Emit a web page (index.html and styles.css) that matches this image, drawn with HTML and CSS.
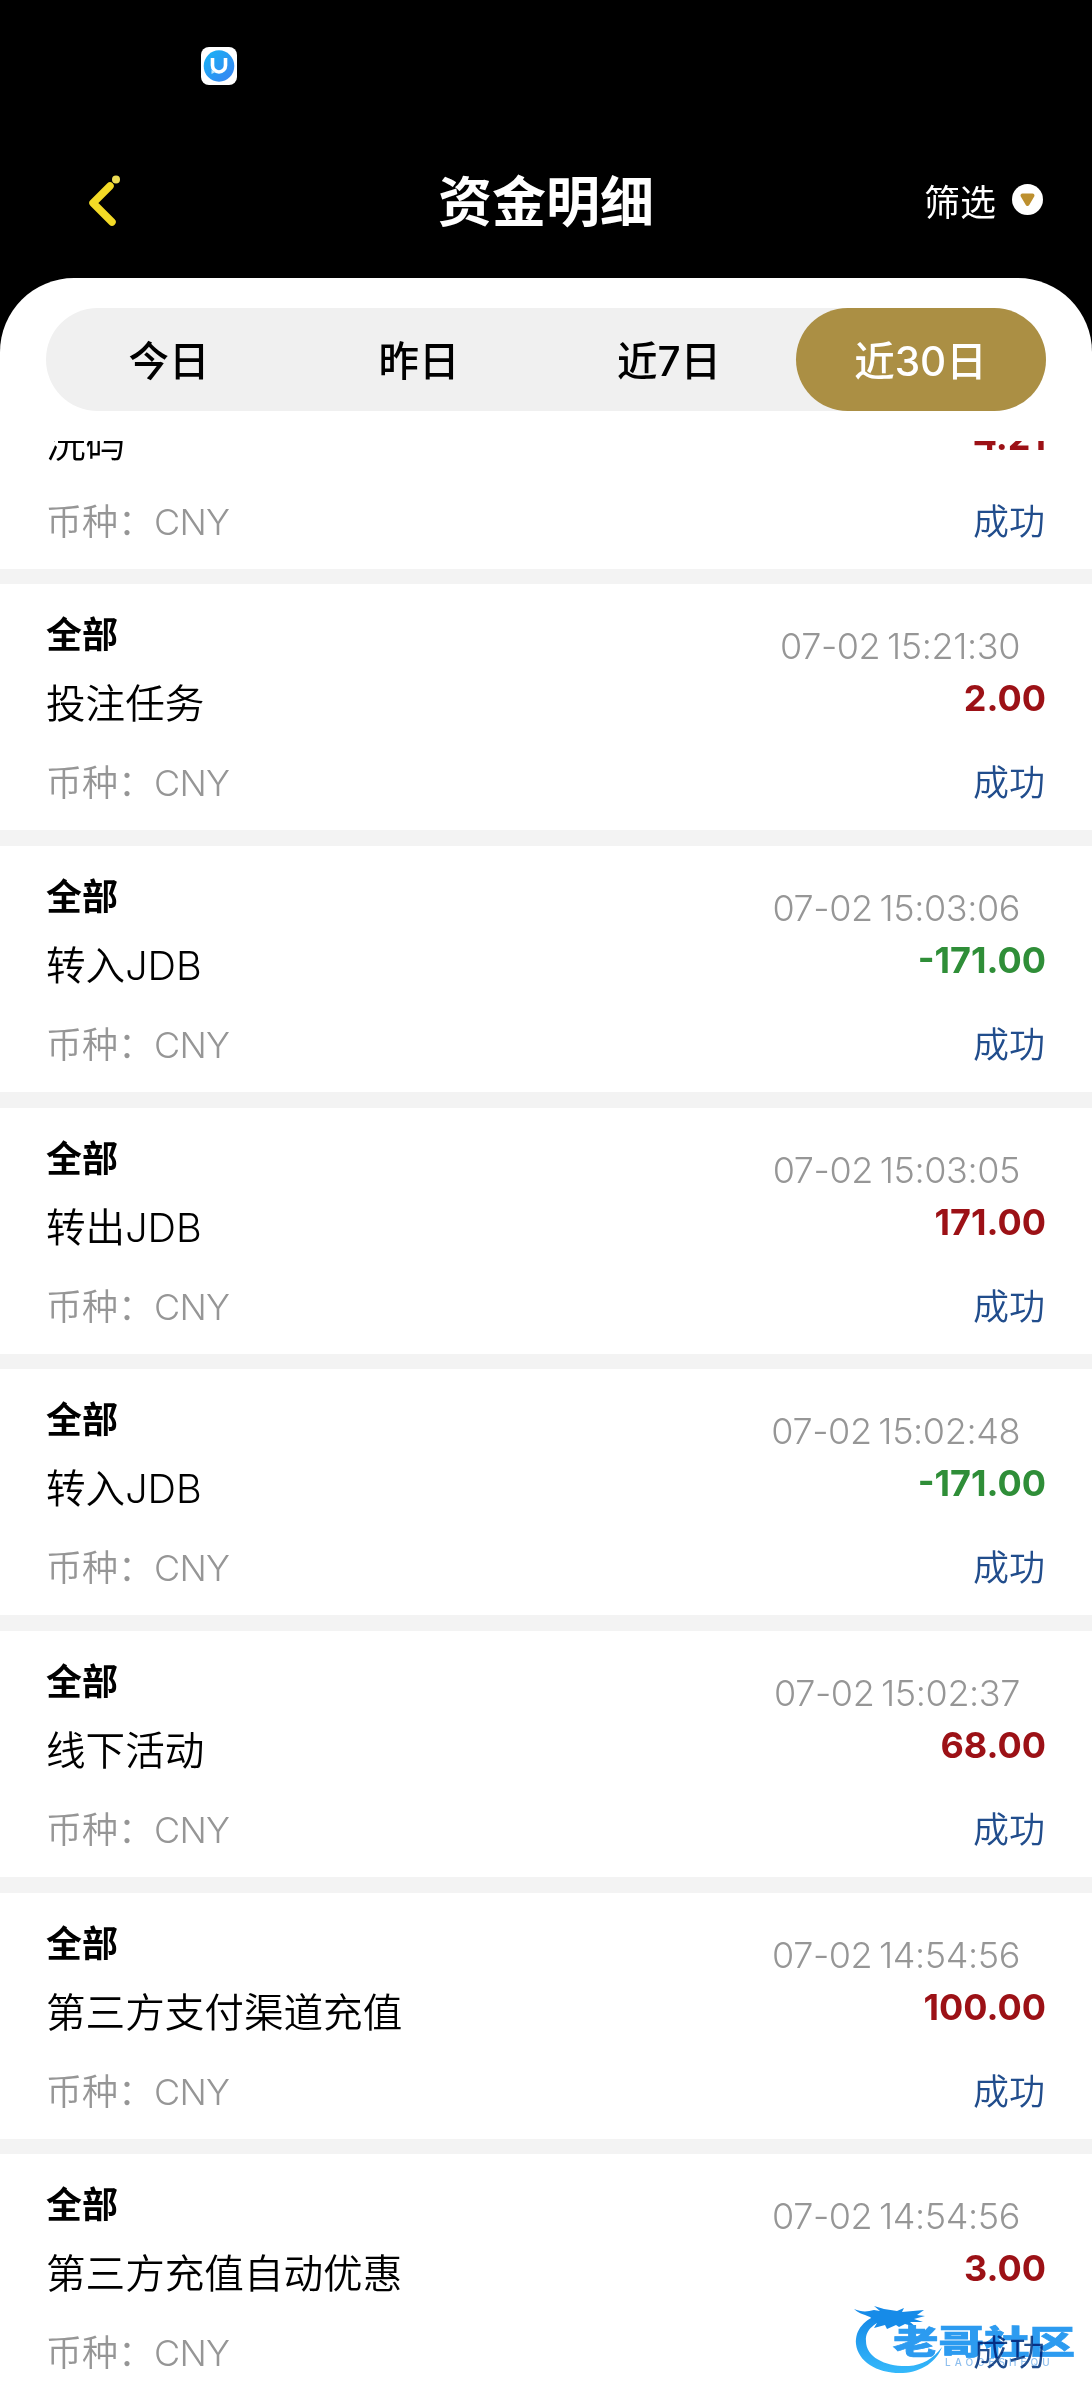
FILE: index.html
```html
<!DOCTYPE html>
<html lang="zh-CN">
<head>
    <meta charset="UTF-8">
    <meta name="viewport" content="width=device-width, initial-scale=1.0">
    <title>资金明细</title>
    <link rel="stylesheet" href="styles.css">
</head>
<body>
    <div class="status-bar">
        <svg class="app-icon" viewBox="0 0 36 38">
            <defs>
                <linearGradient id="appBlue" x1="0" y1="0" x2="1" y2="1">
                    <stop offset="0" stop-color="#16b4f5"/>
                    <stop offset="1" stop-color="#3b82f2"/>
                </linearGradient>
            </defs>
            <rect width="36" height="38" rx="8" fill="#fff"/>
            <ellipse cx="18" cy="19" rx="15.3" ry="15.7" fill="url(#appBlue)"/>
            <path d="M11.500 11v7.500a6.500 6.500 0 0 0 13 0V11" fill="none" stroke="#fff" stroke-width="3.600"/>
            <path d="M10.500 23v4l4-2z" fill="#bfe6fb"/>
        </svg>
    </div>
    <header>
        <svg class="back" viewBox="0 0 34 56">
            <path d="M24 13L7 30l19 19" fill="none" stroke="#f3da26" stroke-width="7.500" stroke-linecap="round" stroke-linejoin="round"/>
            <circle cx="30" cy="6.500" r="4" fill="#eddc55"/>
        </svg>
        <h1>资金明细</h1>
        <div class="filter">
            <span>筛选</span>
            <svg class="filter-icon" viewBox="0 0 31 31">
                <circle cx="15.500" cy="15.500" r="15.500" fill="#fff"/>
                <path d="M10.500 11.500h10l-5 8.500z" fill="#bd902f" stroke="#bd902f" stroke-width="4" stroke-linejoin="round"/>
            </svg>
        </div>
    </header>
    <main>
        <nav class="tabs">
            <a>今日</a>
            <a>昨日</a>
            <a>近7日</a>
            <a class="active">近30日</a>
        </nav>
        <section class="list">
            <div class="item">
                <div class="left">
                    <p class="name">洗码</p>
                    <p class="currency">币种：<span>CNY</span></p>
                </div>
                <div class="right">
                    <p class="amount">4.21</p>
                    <p class="state">成功</p>
                </div>
            </div>
            <div class="item">
                <div class="left">
                    <h2>全部</h2>
                    <p class="name">投注任务</p>
                    <p class="currency">币种：<span>CNY</span></p>
                </div>
                <div class="right">
                    <p class="time">07-02 15:21:30</p>
                    <p class="amount">2.00</p>
                    <p class="state">成功</p>
                </div>
            </div>
            <div class="item">
                <div class="left">
                    <h2>全部</h2>
                    <p class="name">转入JDB</p>
                    <p class="currency">币种：<span>CNY</span></p>
                </div>
                <div class="right">
                    <p class="time">07-02 15:03:06</p>
                    <p class="amount out">-171.00</p>
                    <p class="state">成功</p>
                </div>
            </div>
            <div class="item">
                <div class="left">
                    <h2>全部</h2>
                    <p class="name">转出JDB</p>
                    <p class="currency">币种：<span>CNY</span></p>
                </div>
                <div class="right">
                    <p class="time">07-02 15:03:05</p>
                    <p class="amount">171.00</p>
                    <p class="state">成功</p>
                </div>
            </div>
            <div class="item">
                <div class="left">
                    <h2>全部</h2>
                    <p class="name">转入JDB</p>
                    <p class="currency">币种：<span>CNY</span></p>
                </div>
                <div class="right">
                    <p class="time">07-02 15:02:48</p>
                    <p class="amount out">-171.00</p>
                    <p class="state">成功</p>
                </div>
            </div>
            <div class="item">
                <div class="left">
                    <h2>全部</h2>
                    <p class="name">线下活动</p>
                    <p class="currency">币种：<span>CNY</span></p>
                </div>
                <div class="right">
                    <p class="time">07-02 15:02:37</p>
                    <p class="amount">68.00</p>
                    <p class="state">成功</p>
                </div>
            </div>
            <div class="item">
                <div class="left">
                    <h2>全部</h2>
                    <p class="name">第三方支付渠道充值</p>
                    <p class="currency">币种：<span>CNY</span></p>
                </div>
                <div class="right">
                    <p class="time">07-02 14:54:56</p>
                    <p class="amount">100.00</p>
                    <p class="state">成功</p>
                </div>
            </div>
            <div class="item">
                <div class="left">
                    <h2>全部</h2>
                    <p class="name">第三方充值自动优惠</p>
                    <p class="currency">币种：<span>CNY</span></p>
                </div>
                <div class="right">
                    <p class="time">07-02 14:54:56</p>
                    <p class="amount">3.00</p>
                    <p class="state">成功</p>
                </div>
            </div>
        </section>
    </main>

    <svg class="watermark" viewBox="0 0 230 76">
        <defs>
            <linearGradient id="markBlue" x1="0" y1="0" x2="0" y2="1">
                <stop offset="0" stop-color="#1587e6"/>
                <stop offset="1" stop-color="#35b9fb"/>
            </linearGradient>
        </defs>
        <!-- dragon body and head -->
        <path d="M27 9C10 14 1 25 2 39c2 18 22 30 47 29 19-1 34-12 39-26-9 12-20 18-33 19-22 1-43-8-43-25C11 24 22 17 34 14z" fill="url(#markBlue)"/>
        <path d="M0 4c7 3 13 3 20 1l6 1-6-5 10 3 13 2 7-3-2 4 22-2-7 5 8 1-11 3 9 3-13 0 6 5-11-3-6 3-3-2-9 4-2-4-11 3 3-5-7-6C9 9 4 8 0 4z" fill="#168be8"/>
        <text transform="translate(39 48.500) scale(1 .72)" class="mark-name">老哥社区</text>
        <text x="91" y="61" class="mark-latin">LAOGESHEQU</text>
    </svg>
</body>
</html>
```
FILE: styles.css
```css
* {
    box-sizing: border-box;
}

body {
    font-family: Inter, "Noto Sans CJK SC", sans-serif;
    margin: 0;
    background-color: #000;
    color: #000;
    height: 2400px;
    overflow: hidden;
    position: relative;
}

h1, h2, p {
    margin: 0;
}

.status-bar {
    height: 124px;
    padding: 47px 0 0 201px;
}

.app-icon {
    display: block;
    width: 36px;
    height: 38px;
}

header {
    height: 154px;
    display: grid;
    grid-template-columns: 1fr auto 1fr;
    align-items: center;
    padding: 0 49px 0 86px;
    color: white;
}

.back {
    width: 34px;
    height: 56px;
}

h1 {
    font-size: 54px;
    line-height: 80px;
    margin-left: -37px;
    padding-top: 4px;
}

.filter {
    display: flex;
    justify-content: flex-end;
    align-items: center;
    gap: 16px;
    font-size: 36px;
    font-weight: 400;
    padding-bottom: 3px;
}

.filter-icon {
    width: 31px;
    height: 31px;
}

main {
    background-color: white;
    border-radius: 74px 74px 0 0;
    height: 2122px;
    padding-top: 30px;
}

.tabs {
    display: flex;
    margin: 0 46px 30px;
    height: 103px;
    border-radius: 52px;
    background-color: #f0f0f0;
}

.tabs a {
    width: 25%;
    text-align: center;
    font-size: 40.5px;
    font-weight: 450;
    line-height: 107px;
    padding-right: 4px;
    border-radius: 52px;
}

.tabs .active {
    background-color: #ab8f44;
    color: white;
    padding-right: 1px;
}

/* scrolled so that the first record is partly hidden */
.list {
    display: flex;
    flex-direction: column;
    gap: 15.7px;
    height: 1959px;
    overflow: hidden;
    background-color: #f3f3f3;
}

.item {
    display: flex;
    justify-content: space-between;
    flex-shrink: 0;
    height: 246px;
    padding: 24px 46px 0;
    background-color: white;
}

.item:first-child {
    height: 127.5px;
    padding-top: 0;
    align-items: flex-end;
    padding-bottom: 20px;
}

h2 {
    font-size: 36px;
    line-height: 54px;
}

.name {
    font-size: 39.6px;
    line-height: 60px;
    margin-top: 12px;
    font-weight: 350;
}

.currency {
    font-size: 36px;
    line-height: 54px;
    margin-top: 22px;
    font-weight: 350;
    color: #969696;
}

.currency span {
    letter-spacing: -0.8px;
}

.right {
    text-align: right;
}

.time {
    font-size: 36px;
    font-weight: 350;
    line-height: 54px;
    letter-spacing: -0.4px;
    word-spacing: -3px;
    margin-top: 11px;
    padding-right: 26px;
    color: #969696;
}

.amount {
    font-size: 36px;
    font-weight: 700;
    line-height: 50px;
    color: #9c1116;
}

.out {
    color: #2f8e38;
}

.state {
    font-size: 36px;
    line-height: 54px;
    font-weight: 350;
    margin-top: 33px;
    padding-right: 1px;
    color: #214d8c;
}

.watermark {
    position: absolute;
    left: 854px;
    top: 2305px;
    width: 230px;
    height: 76px;
    mix-blend-mode: multiply;
}

.mark-name {
    font-size: 45.5px;
    font-weight: 900;
    fill: #2c9bf0;
    stroke: #2c9bf0;
    stroke-width: 1px;
}

.mark-latin {
    font-size: 10px;
    font-weight: 500;
    letter-spacing: 4px;
    fill: #8fbfee;
}
```
